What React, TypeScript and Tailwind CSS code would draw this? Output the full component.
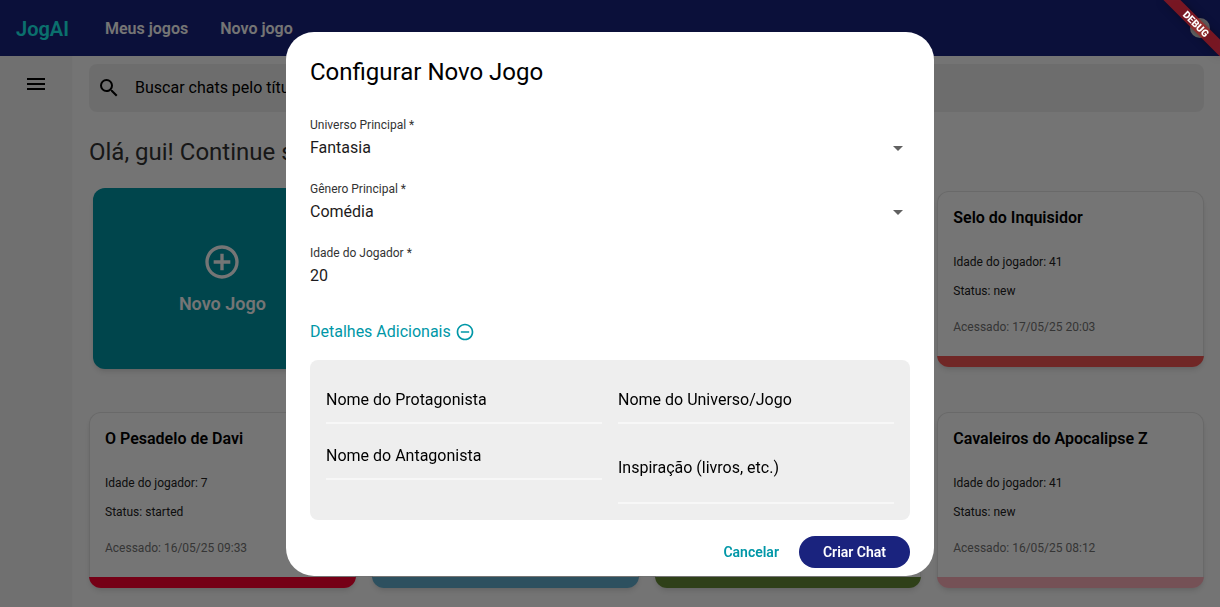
import { useState } from "react";
import {
  MdAddCircleOutline,
  MdArrowDropDown,
  MdMenu,
  MdRemoveCircleOutline,
  MdSearch,
} from "react-icons/md";

type Game = {
  bar: string;
  title?: string;
  age?: number;
  status?: string;
  accessed?: string;
  place?: string;
};

const games: Game[] = [
  {
    bar: "bg-[#f45653]",
    title: "Selo do Inquisidor",
    age: 41,
    status: "new",
    accessed: "17/05/25 20:03",
    place: "col-start-4",
  },
  {
    bar: "bg-[#ff0030]",
    title: "O Pesadelo de Davi",
    age: 7,
    status: "started",
    accessed: "16/05/25 09:33",
  },
  { bar: "bg-[#62aecf]" },
  { bar: "bg-[#688b38]" },
  {
    bar: "bg-[#ffb0bc]",
    title: "Cavaleiros do Apocalipse Z",
    age: 41,
    status: "new",
    accessed: "16/05/25 08:12",
  },
];

function GameCard({ game }: { game: Game }) {
  return (
    <article
      className={`flex h-44 flex-col self-center overflow-hidden rounded-xl bg-white shadow-md ring-1 ring-[#e4e4e4] ring-inset ${game.place ?? ""}`}
    >
      {game.title && (
        <div className="px-4 pt-4 text-xs">
          <h2 className="text-base leading-[22px] font-semibold text-black">{game.title}</h2>
          <p className="mt-[25px] text-[#212121]">Idade do jogador: {game.age}</p>
          <p className="mt-[13px] text-[#212121]">Status: {game.status}</p>
          <p className="mt-5 text-[#757575]">Acessado: {game.accessed}</p>
        </div>
      )}
      <div className={`mt-auto h-[11px] ${game.bar}`} />
    </article>
  );
}

function SelectField({ id, label, options }: { id: string; label: string; options: string[] }) {
  return (
    <div className="flex h-14 flex-col gap-[3px] pt-[5px]">
      <label htmlFor={id} className="text-xs text-[#333]">
        {label}
      </label>
      <div className="relative">
        <select
          id={id}
          className="block h-6 w-full appearance-none bg-transparent pr-8 text-base text-[#1d1b20] outline-none"
        >
          {options.map((o) => (
            <option key={o}>{o}</option>
          ))}
        </select>
        <MdArrowDropDown className="pointer-events-none absolute top-0 right-0 size-6 text-[#616161]" />
      </div>
    </div>
  );
}

const floating =
  "pointer-events-none absolute inset-x-0 truncate text-base text-black peer-[:not(:placeholder-shown)]:hidden";

function TextField({ id, label }: { id: string; label: string }) {
  return (
    <div className="relative flex h-12">
      <input
        id={id}
        placeholder=" "
        className="peer w-full border-b-2 border-[#f7f7f7] bg-transparent text-base outline-none"
      />
      <label htmlFor={id} className={`top-3 ${floating}`}>
        {label}
      </label>
    </div>
  );
}

function TextArea({ id, label }: { id: string; label: string }) {
  return (
    <div className="relative flex h-18">
      <textarea
        id={id}
        placeholder=" "
        className="peer w-full resize-none border-b-2 border-[#f7f7f7] bg-transparent pt-6 text-base outline-none"
      />
      <label htmlFor={id} className={`top-6 ${floating}`}>
        {label}
      </label>
    </div>
  );
}

function NewGameDialog() {
  const [open, setOpen] = useState(true);
  const [age, setAge] = useState("20");
  return (
    <form
      role="dialog"
      aria-labelledby="dialog-title"
      onSubmit={(e) => e.preventDefault()}
      className="mx-10 w-full max-w-[648px] rounded-[28px] bg-white px-6 pt-6 pb-2"
    >
      <h1 id="dialog-title" className="mb-6 text-2xl text-black">
        Configurar Novo Jogo
      </h1>
      <div className="flex flex-col gap-2">
        <SelectField id="universo" label="Universo Principal *" options={["Fantasia"]} />
        <SelectField id="genero" label="Gênero Principal *" options={["Comédia"]} />
        <div className="flex h-14 flex-col gap-[3px] pt-[5px]">
          <label htmlFor="idade" className="text-xs text-[#333]">
            Idade do Jogador *
          </label>
          <input
            id="idade"
            inputMode="numeric"
            value={age}
            onChange={(e) => setAge(e.target.value)}
            className="h-6 w-full bg-transparent text-base text-[#1d1b20] outline-none"
          />
        </div>
      </div>
      <button
        type="button"
        aria-expanded={open}
        onClick={() => setOpen(!open)}
        className="mt-4 mb-2 flex h-10 items-center gap-1 text-base text-[#0097a7]"
      >
        Detalhes Adicionais
        {open ? <MdRemoveCircleOutline className="size-5" /> : <MdAddCircleOutline className="size-5" />}
      </button>
      {open && (
        <div className="grid grid-cols-2 gap-4 rounded-lg bg-[#eee] p-4">
          <div className="flex flex-col gap-2">
            <TextField id="protagonista" label="Nome do Protagonista" />
            <TextField id="antagonista" label="Nome do Antagonista" />
          </div>
          <div className="flex flex-col gap-2">
            <TextField id="nome-universo" label="Nome do Universo/Jogo" />
            <TextArea id="inspiracao" label="Inspiração (livros, etc.)" />
          </div>
        </div>
      )}
      <div className="mt-4 flex justify-end gap-2 text-sm font-semibold">
        <button type="button" className="h-8 rounded-full px-3 text-[#0097a7]">
          Cancelar
        </button>
        <button type="submit" className="h-8 rounded-full bg-[#1a237e] px-6 text-white">
          Criar Chat
        </button>
      </div>
    </form>
  );
}

function DebugBanner() {
  return (
    <svg
      className="pointer-events-none absolute top-0 right-0 size-18 drop-shadow-[0_0_4px_rgba(0,0,0,0.5)]"
      viewBox="0 0 72 72"
    >
      <g transform="translate(72 0) rotate(45)">
        <rect x="-60" y="28" width="120" height="12" fill="#b71c1c" fillOpacity="0.63" />
        <text x="0" y="37.5" textAnchor="middle" fill="#fff" className="text-[10px] font-black">
          DEBUG
        </text>
      </g>
    </svg>
  );
}

export default function App() {
  return (
    <div className="relative flex h-screen flex-col overflow-hidden bg-[#fdfdfd] font-['Roboto',sans-serif]">
      <header className="flex h-14 shrink-0 items-center bg-[#1a237e] px-4">
        <a href="#" className="pt-0.5 text-xl font-semibold text-[#18f5ee]">
          JogAI
        </a>
        <nav className="ml-9 flex gap-8 pt-0.5 text-base font-semibold text-white">
          <a href="#">Meus jogos</a>
          <a href="#">Novo jogo</a>
        </nav>
        <button type="button" aria-label="Perfil" className="mr-[-6px] ml-auto size-5 rounded-full bg-[#e0e0e0]" />
      </header>

      <div className="flex min-h-0 flex-1">
        <aside className="flex w-18 shrink-0 justify-center bg-[#f5f5f5] pt-4">
          <button type="button" aria-label="Menu" className="size-6 self-start text-black">
            <MdMenu className="size-6" />
          </button>
        </aside>

        <main className="min-w-0 flex-1 overflow-hidden border-l border-[#fafafa] px-4 pt-2">
          <label className="flex h-12 items-center gap-3.5 rounded-lg bg-[#eee] px-2">
            <MdSearch className="size-6 shrink-0 text-black" />
            <input
              type="search"
              aria-label="Buscar chats"
              placeholder="Buscar chats pelo título"
              className="w-full bg-transparent text-base text-black outline-none placeholder:text-black"
            />
          </label>
          <p className="mt-6 text-2xl text-[#333]">Olá, gui! Continue sua aventura</p>
          <div className="mt-4 grid auto-rows-[189px] grid-cols-4 gap-x-4 gap-y-8">
            <button
              type="button"
              className="m-1 flex flex-col items-center justify-center gap-2.5 rounded-xl bg-[#0097a7] text-lg leading-6 font-semibold text-white shadow-md"
            >
              <MdAddCircleOutline className="size-10" />
              Novo Jogo
            </button>
            {games.map((g, i) => (
              <GameCard key={i} game={g} />
            ))}
          </div>
        </main>
      </div>

      <div className="fixed inset-0 flex items-center justify-center bg-black/54">
        <NewGameDialog />
      </div>
      <DebugBanner />
    </div>
  );
}
